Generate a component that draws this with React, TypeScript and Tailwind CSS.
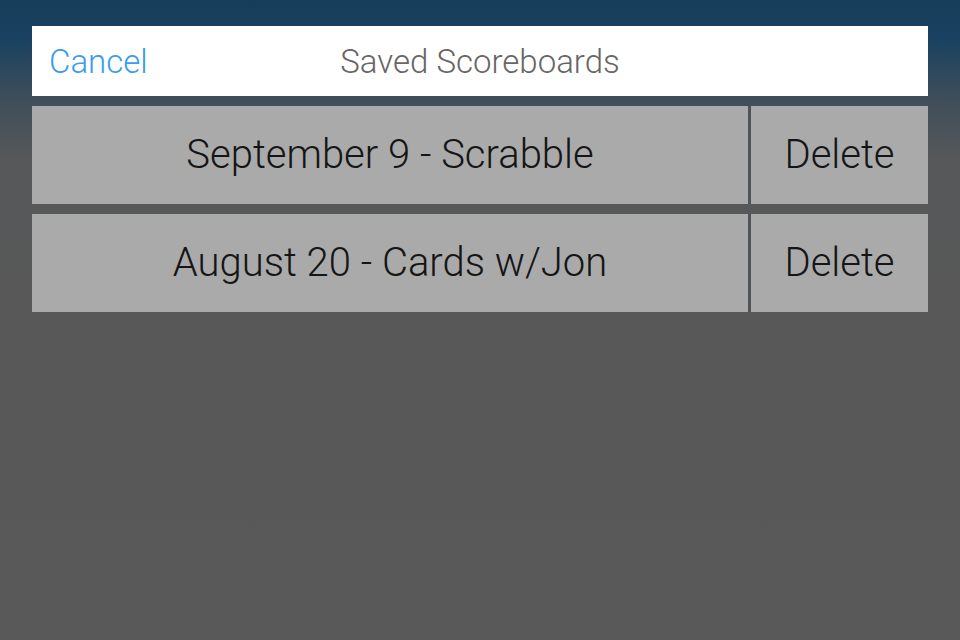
const ROWS = ["September 9 - Scrabble", "August 20 - Cards w/Jon"];

export default function App() {
  return (
    <div className="w-[960px] h-[640px] overflow-hidden bg-[linear-gradient(to_bottom,#163d5a_0px,#1a4260_40px,#3f4e5a_100px,#565859_160px,#585858_300px,#595959_640px)] px-8 pt-[26px] font-['Roboto',sans-serif]">
      <div className="h-[70px] bg-white flex items-center relative">
        <button className="absolute left-[17px] text-[33px] font-light text-[#3a9cf0] leading-none">
          Cancel
        </button>
        <div className="flex-1 text-center text-[33px] font-light text-[#666666] leading-none">
          Saved Scoreboards
        </div>
      </div>
      <div className="mt-[10px] flex flex-col gap-[10px]">
        {ROWS.map((r) => (
          <div key={r} className="h-[98px] flex bg-[#5a5a5a]">
            <div className="w-[716px] bg-[#aaaaaa] flex items-center justify-center text-[40px] font-light text-[#151515]">
              {r}
            </div>
            <div className="w-[3px] bg-[#4e5458]" />
            <div className="flex-1 bg-[#aaaaaa] flex items-center justify-center text-[40px] font-light text-[#151515]">
              Delete
            </div>
          </div>
        ))}
      </div>
    </div>
  );
}
